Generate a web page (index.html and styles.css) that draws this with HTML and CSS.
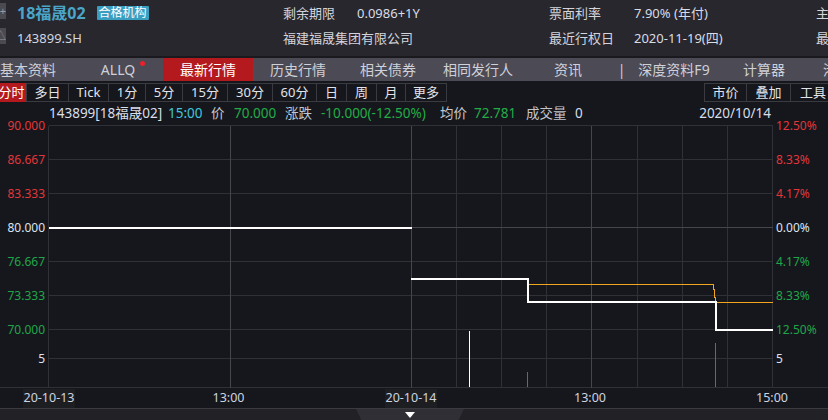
FILE: index.html
```html
<!DOCTYPE html>
<html lang="zh-CN">
<head>
<meta charset="utf-8">
<title>143899.SH 分时</title>
<link rel="stylesheet" href="styles.css">
</head>
<body>
<div class="app">
  <header class="bond-head">
    <div class="side-btn"><span class="side-glyph">+</span></div>
    <div class="title"><span class="name">18福晟02</span><span class="badge">合格机构</span></div>
    <div class="lbl">剩余期限</div>
    <div class="val">0.0986+1Y</div>
    <div class="lbl">票面利率</div>
    <div class="val">7.90% (年付)</div>
    <div class="lbl">主体评级</div>

    <div class="side-btn"><span class="side-glyph">△</span></div>
    <div class="code">143899.SH</div>
    <div class="issuer">福建福晟集团有限公司</div>
    <div class="lbl">最近行权日</div>
    <div class="val">2020-11-19(四)</div>
    <div class="lbl">最新评级</div>
  </header>

  <nav class="tabs">
    <div class="tab">基本资料</div>
    <div class="tab tab-dot">ALLQ</div>
    <div class="tab active">最新行情</div>
    <div class="tab">历史行情</div>
    <div class="tab">相关债券</div>
    <div class="tab">相同发行人</div>
    <div class="tab">资讯</div>
    <div class="tab-sep">|</div>
    <div class="tab tab-f9">深度资料F9</div>
    <div class="tab tab-calc">计算器</div>
    <div class="tab tab-last">港股通</div>
  </nav>

  <div class="toolbar">
    <div class="tb-group">
      <div class="tb-btn active w31">分时</div>
      <div class="tb-btn w43">多日</div>
      <div class="tb-btn w41">Tick</div>
      <div class="tb-btn w38">1分</div>
      <div class="tb-btn w38">5分</div>
      <div class="tb-btn w46">15分</div>
      <div class="tb-btn w46">30分</div>
      <div class="tb-btn w45">60分</div>
      <div class="tb-btn w31">日</div>
      <div class="tb-btn w31">周</div>
      <div class="tb-btn w30">月</div>
      <div class="tb-btn w42">更多</div>
    </div>
    <div class="tb-group tb-right">
      <div class="tb-btn w43">市价</div>
      <div class="tb-btn w45">叠加</div>
      <div class="tb-btn w46">工具</div>
    </div>
  </div>

  <section class="chart">
    <div class="quote">
      <span class="q q-code">143899[18福晟02]</span>
      <span class="q q-time">15:00</span>
      <span class="q q-lab w-jia">价</span>
      <span class="q q-up w-price">70.000</span>
      <span class="q q-lab w-zd">涨跌</span>
      <span class="q q-up w-chg">-10.000(-12.50%)</span>
      <span class="q q-lab w-jj">均价</span>
      <span class="q q-up w-avg">72.781</span>
      <span class="q q-lab w-vol">成交量</span>
      <span class="q q-plain q-grow">0</span>
      <span class="q q-plain q-date">2020/10/14</span>
    </div>
    <svg class="plot" width="828" height="288" viewBox="0 0 828 288">
      <g class="grid">
        <path d="M48.5 5.5H772.5 M48.5 39.5H772.5 M48.5 73.5H772.5 M48.5 141.5H772.5 M48.5 175.5H772.5 M48.5 209.5H772.5 M48.5 238.5H772.5"/>
        <path d="M48.5 5.5V267.5 M456.5 5.5V267.5 M501.5 5.5V267.5 M546.5 5.5V267.5 M637.5 5.5V267.5 M682.5 5.5V267.5 M727.5 5.5V267.5 M772.5 5.5V267.5"/>
        <path d="M0 267.5H828"/>
      </g>
      <g class="grid-major">
        <path d="M48.5 107.5H772.5 M230.5 5.5V267.5 M411.5 5.5V267.5 M591.5 5.5V267.5"/>
      </g>

      <g class="vol">
        <path class="vol-white" d="M469.5 211V267"/>
        <path class="vol-green" d="M527.5 252V267 M715.5 223V267"/>
      </g>

      <path class="avg-line" d="M527.5 159V164.5H713.5V169.5H714.5V177H715.5V182.5H772.5"/>
      <path class="price-line" d="M48.5 108H411.5"/>
      <path class="price-line" d="M411 159H528V182H715.8V210H773"/>

      <g class="axis-left">
        <text class="up" x="45" y="10">90.000</text>
        <text class="up" x="45" y="44">86.667</text>
        <text class="up" x="45" y="78">83.333</text>
        <text class="flat" x="45" y="112">80.000</text>
        <text class="down" x="45" y="146">76.667</text>
        <text class="down" x="45" y="180">73.333</text>
        <text class="down" x="45" y="214">70.000</text>
        <text class="flat" x="45" y="243">5</text>
      </g>
      <g class="axis-right">
        <text class="up" x="776" y="10">12.50%</text>
        <text class="up" x="776" y="44">8.33%</text>
        <text class="up" x="776" y="78">4.17%</text>
        <text class="flat" x="776" y="112">0.00%</text>
        <text class="down" x="776" y="146">4.17%</text>
        <text class="down" x="776" y="180">8.33%</text>
        <text class="down" x="776" y="214">12.50%</text>
        <text class="flat" x="776" y="243">5</text>
      </g>

      <g class="time-axis">
        <rect class="date-box" x="23" y="269" width="52" height="19"/>
        <rect class="date-box" x="385" y="269" width="52" height="19"/>
        <text x="49" y="282">20-10-13</text>
        <text x="228.5" y="282">13:00</text>
        <text x="411" y="282">20-10-14</text>
        <text x="590" y="282">13:00</text>
        <text x="772" y="282">15:00</text>
      </g>
    </svg>
  </section>

  <footer class="bottom-bar">
    <div class="collapse-tab"><span class="arrow-down"></span></div>
  </footer>
</div>
</body>
</html>
```

FILE: styles.css
```css
* {
  box-sizing: border-box;
}

html, body {
  margin: 0;
  padding: 0;
  background: #15171c;
}

body {
  width: 828px;
  height: 420px;
  overflow: hidden;
  font-family: "Noto Sans", "Noto Sans CJK SC", sans-serif;
  color: #d6d8e0;
}

.app {
  width: 828px;
  height: 420px;
  display: flex;
  flex-direction: column;
  overflow: hidden;
}

/* ---------- header ---------- */
.bond-head {
  height: 58px;
  flex: none;
  background: #28272d;
  border-bottom: 2px solid #1a1a1e;
  display: grid;
  grid-template-columns: 6px 277px 74px 192px 85px 182px 1fr;
  grid-template-rows: 25px 25px;
  font-size: 13px;
  white-space: nowrap;
}

.side-btn {
  width: 6px;
  height: 16px;
  margin-top: 3px;
  background: #4a4a50;
  overflow: hidden;
  position: relative;
}

.side-glyph {
  position: absolute;
  right: 0;
  top: 0;
  font-size: 11px;
  line-height: 16px;
  color: #9a9aa2;
}

.title {
  padding-left: 11px;
  display: flex;
  align-items: center;
}

.name {
  font-size: 16px;
  font-weight: bold;
  color: #4aa5c8;
  line-height: 20px;
}

.badge {
  margin-left: 11px;
  background: #3a9ec1;
  color: #ffffff;
  font-size: 12px;
  line-height: 14px;
  padding: 0 2px;
  border-radius: 1px;
}

.lbl, .val, .code, .issuer {
  display: flex;
  align-items: center;
  line-height: 16px;
}

.lbl {
  color: #d4d5dc;
}

.val {
  color: #d8dce6;
}

.code {
  padding-left: 11px;
  color: #d0d6e2;
}

.issuer {
  grid-column: span 2;
  color: #d4d5dc;
}

/* ---------- tabs ---------- */
.tabs {
  height: 23px;
  flex: none;
  background: #4b4a55;
  display: flex;
  margin-left: -17px;
  font-size: 14px;
  line-height: 23px;
  color: #cfd0d8;
  white-space: nowrap;
}

.tab {
  width: 90px;
  flex: none;
  text-align: center;
  position: relative;
}

.tab.active {
  background: #b3191d;
  color: #ffffff;
}

.tab-dot::after {
  content: "";
  position: absolute;
  left: 67px;
  top: 3px;
  width: 5px;
  height: 5px;
  border-radius: 50%;
  background: #e8222c;
}

.tab-sep {
  width: 17px;
  flex: none;
  text-align: center;
}

.tab-f9 {
  width: 88px;
}

.tab-calc {
  width: 92px;
}

.tab-last {
  text-align: left;
  padding-left: 13px;
}

/* ---------- toolbar ---------- */
.toolbar {
  height: 23px;
  flex: none;
  display: flex;
  padding-top: 2px;
  overflow: hidden;
  font-size: 13px;
  color: #e2e4ea;
  background: #15171c;
}

.tb-group {
  display: flex;
  flex: none;
}

.tb-group:first-child {
  margin-left: -4px;
}

.tb-right {
  margin-left: auto;
  margin-right: -8px;
}

.tb-btn {
  height: 19px;
  line-height: 17px;
  border: 1px solid #393b40;
  text-align: center;
  flex: none;
  white-space: nowrap;
}

.tb-btn + .tb-btn {
  margin-left: -1px;
}

.tb-btn.active {
  background: #b3191d;
  border-color: #b3191d;
  color: #ffffff;
}

.w30 { width: 30px; }
.w31 { width: 31px; }
.w38 { width: 38px; }
.w41 { width: 41px; }
.w42 { width: 42px; }
.w43 { width: 43px; }
.w45 { width: 45px; }
.w46 { width: 46px; }

/* ---------- chart ---------- */
.chart {
  height: 304px;
  flex: none;
  display: flex;
  flex-direction: column;
}

.quote {
  height: 16px;
  flex: none;
  display: flex;
  align-items: center;
  padding-left: 49px;
  padding-right: 57px;
  font-size: 13.5px;
  line-height: 16px;
  white-space: nowrap;
  position: relative;
  top: 1px;
}

.q {
  flex: none;
}

.q-code {
  width: 119px;
  color: #d8deea;
}

.q-time {
  width: 43px;
  color: #3fc6dc;
}

.q-lab {
  color: #c4c6ce;
}

.q-up {
  color: #22ad48;
}

.q-plain {
  color: #d8deea;
}

.w-jia { width: 23px; }
.w-price { width: 51px; }
.w-zd { width: 36px; }
.w-chg { width: 119px; }
.w-jj { width: 34px; }
.w-avg { width: 52px; }
.w-vol { width: 49px; }

.q-grow {
  flex: 1;
}

.plot {
  display: block;
  flex: none;
  overflow: visible;
  font-family: "Noto Sans", "Noto Sans CJK SC", sans-serif;
}

.grid path {
  stroke: #2f3136;
  stroke-width: 1;
  fill: none;
  shape-rendering: crispEdges;
}

.grid-major path {
  stroke: #44464c;
  stroke-width: 1;
  fill: none;
  shape-rendering: crispEdges;
}

.price-line {
  stroke: #ffffff;
  stroke-width: 2;
  fill: none;
  shape-rendering: crispEdges;
}

.avg-line {
  stroke: #f2a51e;
  stroke-width: 1;
  fill: none;
  shape-rendering: crispEdges;
}

.vol path {
  stroke-width: 1;
  fill: none;
  shape-rendering: crispEdges;
}

.vol-white {
  stroke: #ffffff;
}

.vol-green {
  stroke: #1d9a2c;
}

.axis-left text,
.axis-right text {
  font-size: 12px;
}

.axis-left text {
  text-anchor: end;
}

.up {
  fill: #e2363a;
}

.down {
  fill: #20a64a;
}

.flat {
  fill: #dde4f0;
}

.time-axis text {
  font-size: 12.5px;
  fill: #cdd4e0;
  text-anchor: middle;
}

.date-box {
  fill: #1d1e22;
}

/* ---------- bottom bar ---------- */
.bottom-bar {
  height: 12px;
  flex: none;
  background: #222226;
  border-top: 1px solid #3a3b40;
  display: flex;
}

.collapse-tab {
  margin-left: 356px;
  width: 108px;
  height: 11px;
  background: #2f2f35;
  clip-path: polygon(0 0, 100% 0, 95% 100%, 5% 100%);
  display: flex;
  justify-content: center;
  padding-top: 3px;
}

.arrow-down {
  width: 0;
  height: 0;
  margin-left: -1px;
  border-left: 5px solid transparent;
  border-right: 5px solid transparent;
  border-top: 6px solid #ffffff;
}
```
